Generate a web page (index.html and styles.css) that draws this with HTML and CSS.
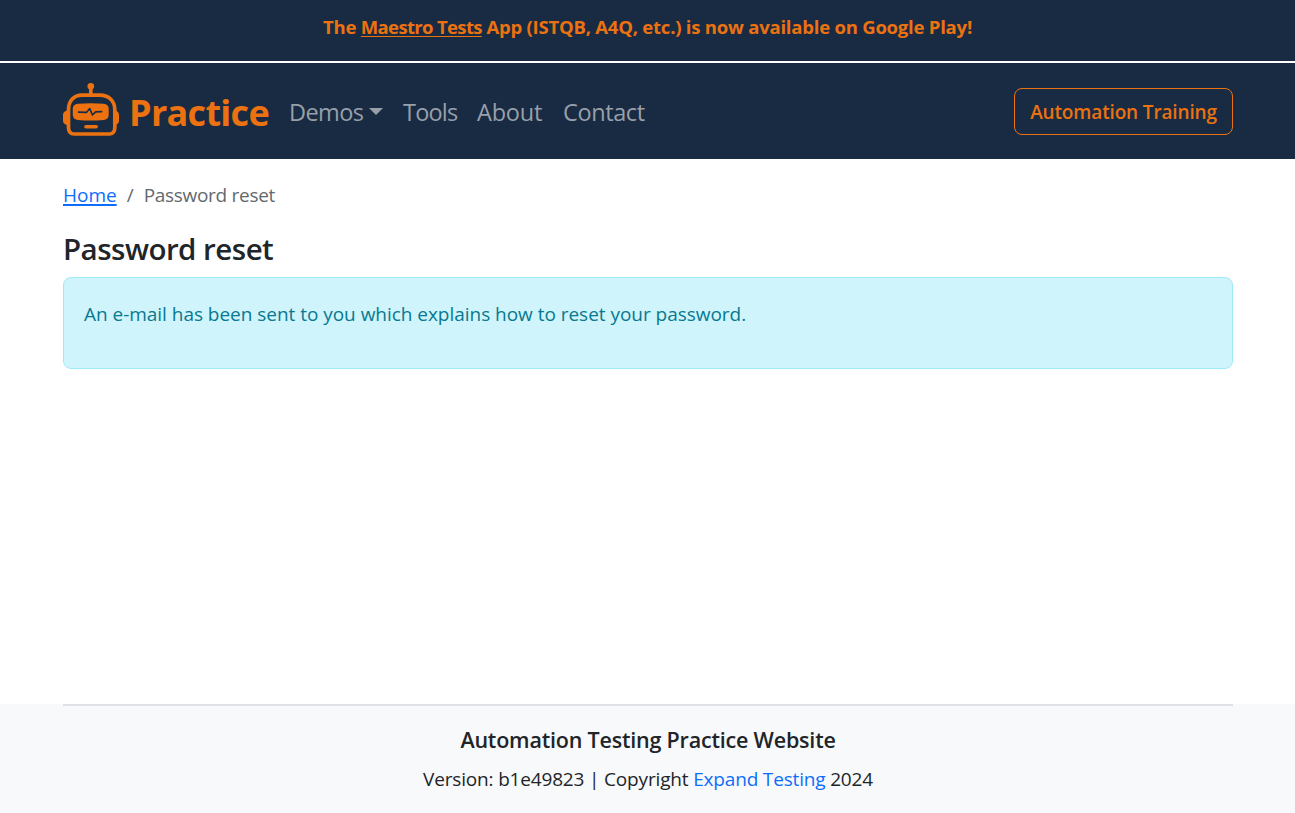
FILE: index.html
```html
<!DOCTYPE html>
<html lang="en">
<head>
<meta charset="utf-8">
<title>Password reset</title>
<link rel="stylesheet" href="styles.css">
</head>
<body>
<div class="promo"><span class="promo-text">The <a href="#">Maestro Tests</a> App (ISTQB, A4Q, etc.) is now available on Google Play!</span></div>
<header class="navbar">
  <div class="container nav-row">
    <a class="brand" href="#">
      <svg class="logo" viewBox="0 0 56 53" width="56" height="53" fill="none">
        <circle cx="27.8" cy="3.3" r="3.3" fill="#ec7211"/>
        <path d="M27.8 4v8" stroke="#ec7211" stroke-width="3.600"/>
        <path d="M19 12.2h18c9 0 14.8 6 14.8 14.500v18c0 3.800-2 6.300-5.500 6.300H11c-3.500 0-5.500-2.500-5.500-6.300v-18c0-8.500 5-14.500 13.500-14.500z" stroke="#ec7211" stroke-width="3.700"/>
        <path d="M4.500 27.500C1.500 28 0 29.500 0 32v5.500c0 2.500 1.500 4 4.500 4.500zM52 27.500c2.500.5 4 2 4 4.500v5.500c0 2.500-1.500 4-4 4.500z" fill="#ec7211"/>
        <path d="M15 20.700q12.800-1 25.500 0 5 .4 5.200 4.800v6.500q-.2 4.500-5.200 5-12.700 1.200-25.500 0-5-.5-5.200-5v-6.500q.2-4.400 5.200-4.800z" fill="#ec7211"/>
        <path d="M15.500 29.100l8 .3 3.200-3.900 2.700 6.400 3.300-3 6-.3" stroke="#182b43" stroke-width="1.600" stroke-linejoin="round" stroke-linecap="round"/>
        <path d="M22.900 43.700h10.300" stroke="#ec7211" stroke-width="3.500" stroke-linecap="round"/>
      </svg>
      <span class="brand-name">Practice</span>
    </a>
    <nav class="links">
      <a class="demos" href="#">Demos<i class="caret"></i></a>
      <a class="tools" href="#">Tools</a>
      <a class="about" href="#">About</a>
      <a class="contact" href="#">Contact</a>
    </nav>
    <a class="training" href="#">Automation Training</a>
  </div>
</header>
<main class="container content">
  <nav class="crumbs"><a href="#">Home</a><span class="slash">/</span><span class="current">Password reset</span></nav>
  <h1>Password reset</h1>
  <div class="alert"><span>An e-mail has been sent to you which explains how to reset your password.</span></div>
</main>
<footer class="footer">
  <div class="container footer-inner">
    <h2>Automation Testing Practice Website</h2>
    <p>Version: b1e49823 | Copyright <a href="#">Expand Testing</a> 2024</p>
  </div>
</footer>
</body>
</html>
```

FILE: styles.css
```css
* { box-sizing: border-box; }
body {
  margin: 0;
  height: 813px;
  display: flex;
  flex-direction: column;
  font-family: "Segoe UI", "Open Sans", "Noto Sans", sans-serif;
  font-size: 19px;
  color: #212529;
  background: #fff;
}
.container { width: 1170px; margin: 0 62px 0 63px; }
.promo {
  height: 63px;
  padding-top: 12px;
  line-height: 30px;
  text-align: center;
  background: #182b43;
  border-bottom: 2px solid #fff;
  color: #ec7211;
  font-size: 18.5px;
  font-weight: 700;
  letter-spacing: -.22px;
}
.promo a { color: inherit; text-underline-offset: 2px; letter-spacing: -.65px; }
.navbar { height: 96px; background: #182b43; }
.nav-row { height: 96px; display: flex; align-items: center; }
.brand { display: flex; align-items: center; text-decoration: none; color: #ec7211; width: 226px; }
.logo { flex: none; margin-right: 10px; margin-top: -3px; }
.brand-name { font-size: 36px; line-height: 50px; padding-top: 3px; font-weight: 700; letter-spacing: -.7px; }
.links { display: flex; gap: 20px; font-size: 23.5px; line-height: 36px; padding-top: 2px; }
.links a { color: #989fa9; text-decoration: none; white-space: nowrap; }
.demos { width: 94px; letter-spacing: -.6px; }
.tools { width: 54px; letter-spacing: -.8px; }
.about { width: 66px; letter-spacing: -.2px; }
.contact { letter-spacing: -.4px; }
.caret {
  display: inline-block;
  margin-left: 6px;
  vertical-align: 6px;
  border: 7px solid transparent;
  border-top-color: #989fa9;
  border-bottom: 0;
}
.training {
  margin-left: auto;
  width: 219px;
  height: 47px;
  border: 1px solid #ec7211;
  border-radius: 8px;
  line-height: 46px;
  text-align: center;
  text-decoration: none;
  color: #ec7211;
  font-weight: 600;
  letter-spacing: -.15px;
}
.content { flex: 1; padding-top: 21px; }
.crumbs { display: flex; line-height: 30px; }
.crumbs a { color: #0d6efd; text-underline-offset: 2px; text-decoration-thickness: 2px; }
.slash { margin: 0 10px; color: #63696e; }
.current { color: #63696e; letter-spacing: -.3px; }
h1 { margin: 19px 0 9px; font-size: 29.5px; line-height: 39px; font-weight: 600; letter-spacing: -.52px; }
.alert {
  height: 92px;
  padding: 21px 20px;
  line-height: 30px;
  color: #087990;
  background: #cff4fc;
  border: 1px solid #9eeaf9;
  border-radius: 8px;
  letter-spacing: -.03px;
}
.footer { height: 109px; background: #f8f9fa; text-align: center; }
.footer-inner { border-top: 2px solid #dee2e6; padding-top: 19px; }
h2 { margin: 0; font-size: 21.5px; line-height: 30px; font-weight: 600; letter-spacing: -.2px; }
.footer p { margin: 9px 0 0; line-height: 30px; letter-spacing: -.17px; }
.footer a { color: #0d6efd; text-decoration: none; }
```
